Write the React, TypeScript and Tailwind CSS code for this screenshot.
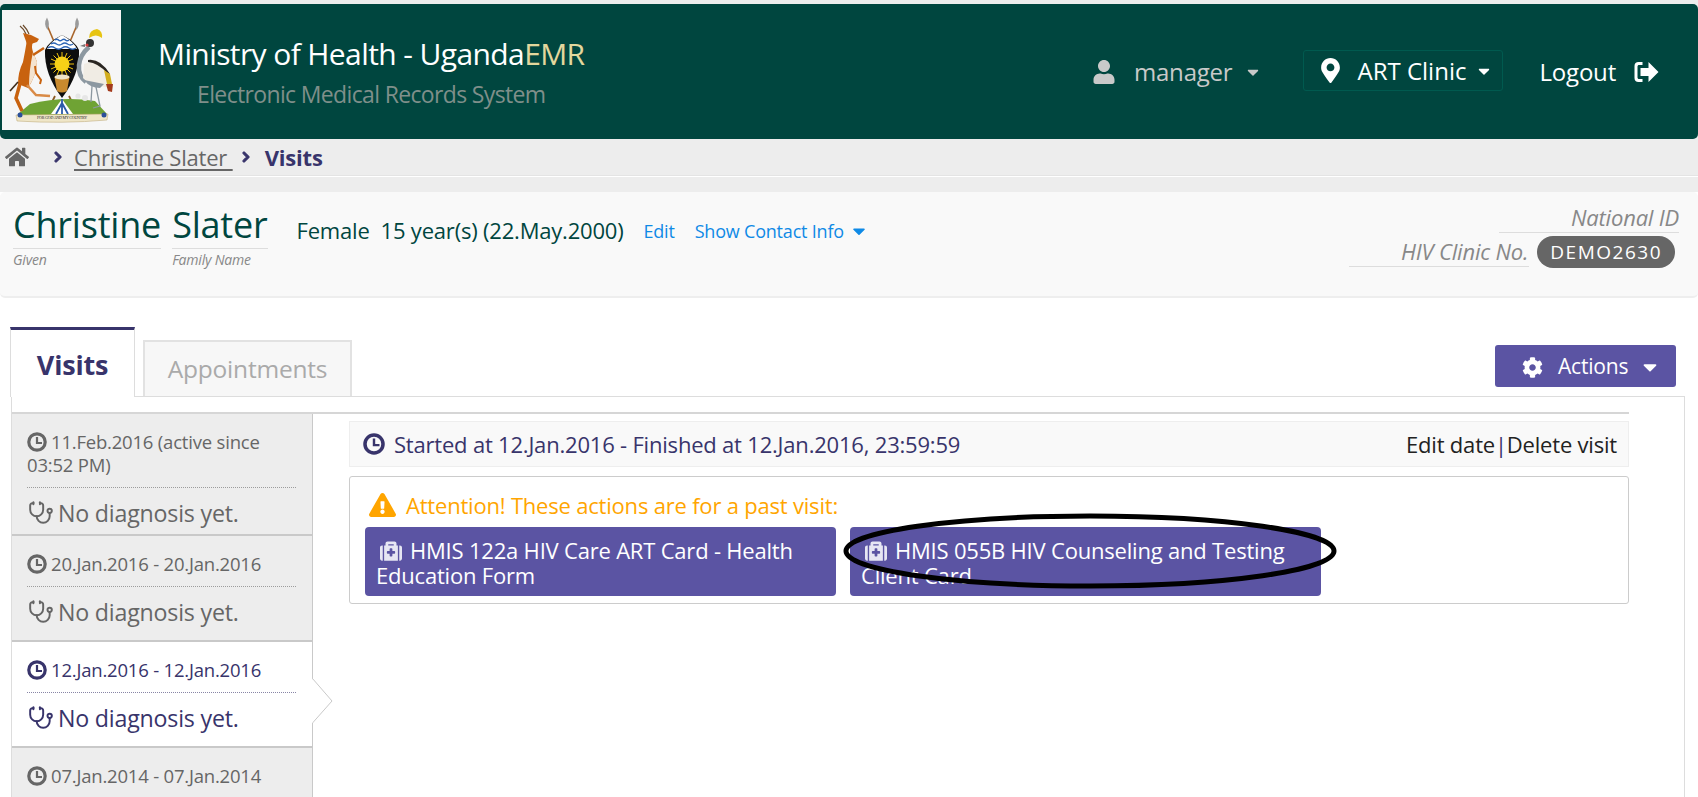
import React from "react";
import {
  FaCaretDown,
  FaChevronRight,
  FaCog,
  FaExclamationTriangle,
  FaHome,
  FaMapMarkerAlt,
  FaMedkit,
  FaUser,
} from "react-icons/fa";
import { Stethoscope } from "lucide-react";

type Visit = {
  label: string;
  active?: boolean;
  h: string;
};

const visits: Visit[] = [
  { label: "11.Feb.2016 (active since 03:52 PM)", h: "h-[122px]" },
  { label: "20.Jan.2016 - 20.Jan.2016", h: "h-[106px]" },
  { label: "12.Jan.2016 - 12.Jan.2016", h: "h-[106px]", active: true },
  { label: "07.Jan.2014 - 07.Jan.2014", h: "h-[106px]" },
];

const ClockIcon = ({ className }: { className?: string }) => (
  <svg viewBox="0 0 20 20" className={className}>
    <circle cx="10" cy="10" r="8.200" fill="none" stroke="currentColor" strokeWidth="3.200" />
    <path d="M10 5V11H15" fill="none" stroke="currentColor" strokeWidth="2.200" />
  </svg>
);

const SignOutIcon = () => (
  <svg viewBox="0 0 26 22" className="h-[22px] w-[29px]" fill="currentColor">
    <path d="M9 1H5C2.500 1 1 2.600 1 5v12c0 2.400 1.500 4 4 4h4v-3H5.500C4.600 18 4 17.400 4 16.500v-11C4 4.600 4.600 4 5.500 4H9z" />
    <path d="M15 1l10 10-10 10v-6H7V7h8z" />
  </svg>
);

const CoatOfArms = () => (
  <svg viewBox="2 10 119 120" className="h-[120px] w-[119px]">
    <rect x="2" y="10" width="119" height="120" fill="#f6f6f6" />
    {/* spears */}
    <path d="M55 44L47 25" stroke="#a8642a" strokeWidth="1.600" />
    <path d="M69 44L77 25" stroke="#a8642a" strokeWidth="1.600" />
    <path d="M47 17.500Q43 24 47.500 30Q50.500 24 47 17.500Z" fill="#9a9a9a" />
    <path d="M77 17.500Q81 24 76.500 30Q73.500 24 77 17.500Z" fill="#9a9a9a" />
    <path d="M55 96L49 108M69 96L75 108" stroke="#8a5a24" strokeWidth="1.800" />
    {/* mound and water */}
    <path d="M30 104Q62 96 95 101L107 114Q62 122 18 114Z" fill="#6fa334" />
    <path d="M62 99L51 114H73Z" fill="#fff" />
    <path d="M62 103L56 114M62 103L68 114M62 99V114" stroke="#2b5aa8" strokeWidth="1.800" />
    <circle cx="78" cy="96" r="2.600" fill="#e6e6e6" />
    <circle cx="85" cy="98" r="3" fill="#e6e6e6" />
    {/* shield */}
    <path d="M45 50Q48 42 62 35Q76 42 79 50Q80 74 62 98Q44 74 45 50Z" fill="#0d0d0d" />
    <path d="M47 49Q50 42 62 35Q74 42 77 49Z" fill="#fff" />
    <path d="M48 48q3.500-2.500 7 0t7 0 7 0 7 0M51 44q2.750-2 5.500 0t5.500 0 5.500 0 5.500 0M55 40q2-1.500 3.500 0t3.500 0 3.500 0 3.500 0" fill="none" stroke="#2b64b5" strokeWidth="1.500" />
    <g stroke="#f1c40f" strokeWidth="1">
      <path d="M50 64H74M62 52V76M53.500 55.500L70.500 72.500M70.500 55.500L53.500 72.500M51 59L73 69M73 59L51 69M57 53L67 75M67 53L57 75" />
    </g>
    <circle cx="62" cy="64" r="7.500" fill="#f7d117" />
    <path d="M54.500 77Q62 72.500 69.500 77L67 91Q62 94 57 91Z" fill="#c98a2e" />
    <ellipse cx="62" cy="77" rx="7.500" ry="2.500" fill="#efe3c8" />
    {/* kob */}
    <path d="M20 26Q24 29 26 34M23 25Q27 29 29 34" stroke="#6b4a2a" strokeWidth="1.200" fill="none" />
    <path d="M23 33L31 35L39 39L37 42L31 44L27 44Z" fill="#c8620f" />
    <path d="M27 40Q25 52 23 62Q18 72 18 84L28 88Q36 76 37 62L33 52Q31 46 33 42Z" fill="#c8620f" />
    <path d="M33 52L37 62Q36 76 29 86Q29 70 33 52Z" fill="#f4e3cf" />
    <path d="M33 55L44 48" stroke="#c8620f" strokeWidth="2.500" />
    <path d="M35 66L36 73L41 80L40 84" fill="none" stroke="#c8620f" strokeWidth="2" />
    <path d="M21 80L16 98L22 111" fill="none" stroke="#c8620f" strokeWidth="3.500" />
    <path d="M27 85L36 95L50 96" fill="none" stroke="#d98a46" strokeWidth="2.500" />
    <path d="M18 82L10 91" stroke="#3d2a18" strokeWidth="1.600" />
    {/* crane */}
    <path d="M89 47Q80 55 79 65Q78 76 86 82" fill="none" stroke="#8c98a1" strokeWidth="4.500" />
    <path d="M84 64Q96 58 106 72L110 88L100 86Q88 84 83 78Z" fill="#f0ece4" />
    <path d="M88 60Q100 58 110 74L107 73Q98 63 88 62Z" fill="#2a2622" />
    <path d="M104 70L110 74L112 84L107 84Z" fill="#d2ad1c" />
    <path d="M106 84L113 84L112 92L108 91Z" fill="#a33a1c" />
    <path d="M84 80L104 84L100 88Q90 88 84 80Z" fill="#8c98a1" />
    <path d="M96 87L100 106L93 108M92 86L91 102" fill="none" stroke="#8c98a1" strokeWidth="1.300" />
    <circle cx="90" cy="43" r="4" fill="#333" />
    <circle cx="87" cy="45" r="1.600" fill="#d43a3a" />
    <path d="M85 44L80 46L85 47Z" fill="#777" />
    <path d="M89 38Q89 30 97 29Q103 31 102 38Q96 33 89 38Z" fill="#e7c413" />
    {/* motto */}
    <path d="M16 115L108 114L107 120Q62 124 17 121Z" fill="#efe6c8" stroke="#b9a36d" strokeWidth=".5" />
    <circle cx="20" cy="115" r="2.500" fill="#2b4f9a" />
    <circle cx="104" cy="115" r="2.500" fill="#2b4f9a" />
    <text x="62" y="119" textAnchor="middle" fontSize="4" fill="#222" fontFamily="'Liberation Serif', serif">
      FOR GOD AND MY COUNTRY
    </text>
  </svg>
);

const VisitItem = ({ visit }: { visit: Visit }) => {
  const tone = visit.active ? "text-[#38346b]" : "text-[#666666]";
  return (
    <div
      className={`relative border-b-2 border-[#c9c9c9] pl-[15px] pr-[16px] pt-[16px] ${visit.h} ${tone} ${
        visit.active ? "bg-white" : "bg-[#ededed]"
      }`}
    >
      <div className="border-b border-dotted border-current/60 pb-[11px] text-[18.500px] leading-[23px]">
        <ClockIcon className="mr-[4px] inline-block h-[20px] w-[20px] align-[-3px]" />
        {visit.label}
      </div>
      <div className="mt-[10px] flex items-center gap-[4px] text-[23.200px] leading-[30px]">
        <Stethoscope className="ml-[1px] h-[26px] w-[26px]" strokeWidth={1.8} />
        No diagnosis yet.
      </div>
      {visit.active && (
        <svg viewBox="0 0 21 46" className="absolute -right-[21px] top-[36px] h-[46px] w-[21px]">
          <path d="M0.500 0.500L20 23L0.500 45" fill="#fff" stroke="#c9c9c9" />
          <rect x="0" y="1.500" width="1" height="43" fill="#fff" />
        </svg>
      )}
    </div>
  );
};

const FormButton = ({ first, rest }: { first: string; rest: string }) => (
  <button className="h-[69px] w-[471px] rounded-[4px] bg-[#5b54a3] px-[11px] pt-[3px] text-left text-[22px] leading-[25px] text-white">
    <span className="block whitespace-nowrap">
      <FaMedkit className="ml-[3px] mr-[7px] inline-block h-[22px] w-[24px] align-[-3px] text-[#e6e6f3]" />
      {first}
    </span>
    <span className="block whitespace-nowrap">{rest}</span>
  </button>
);

export default function App() {
  return (
    <div className="h-[797px] w-full overflow-hidden bg-white font-['Open_Sans',sans-serif] tracking-[-0.2px]">
      <div className="bg-[#ededed] pt-[4px]">
        <header className="flex h-[135px] rounded-[5px] bg-[#00463f] pl-[2px] pt-[6px]">
          <CoatOfArms />
          <div className="ml-[37px] pt-[25px] text-center">
            <div className="text-[30px] leading-[38px] tracking-[-0.600px] text-white">
              Ministry of Health - Uganda<span className="text-[#e2d79d]">EMR</span>
            </div>
            <div className="mt-[7px] text-[23px] leading-[28px] tracking-[-0.650px] text-[#7f8f8a]">
              Electronic Medical Records System
            </div>
          </div>
          <div className="ml-auto flex items-start pt-[41px] text-[24px] leading-[41px]">
            <div className="flex h-[41px] items-center text-[#c9c9c9]">
              <FaUser className="h-[24px] w-[24px]" />
              <span className="ml-[18px]">manager</span>
              <FaCaretDown className="ml-[12px] h-[18px] w-[18px]" />
            </div>
            <div className="-mt-px ml-[41px] flex h-[41px] w-[200px] items-center rounded-[3px] border border-[#005a4f] pl-[17px] text-white">
              <FaMapMarkerAlt className="h-[25px] w-[19px]" />
              <span className="ml-[17px] tracking-[0px]">ART Clinic</span>
              <FaCaretDown className="ml-[9px] h-[18px] w-[18px]" />
            </div>
            <div className="ml-[36px] mr-[37px] flex h-[41px] items-center text-white">
              Logout
              <span className="ml-[16px]">
                <SignOutIcon />
              </span>
            </div>
          </div>
        </header>

        <nav className="flex h-[37px] items-center border-b border-[#e4e4e4] pl-[5px] text-[22px] text-[#666666]">
          <FaHome className="h-[22px] w-[24px]" />
          <FaChevronRight className="ml-[23px] h-[12px] w-[12px] text-[#38346b]" strokeWidth={50} />
          <span className="ml-[10px] underline underline-offset-[3px]">Christine Slater&nbsp;</span>
          <FaChevronRight className="ml-[7px] h-[12px] w-[12px] text-[#38346b]" strokeWidth={50} />
          <span className="ml-[13px] font-bold text-[#38346b]">Visits</span>
        </nav>
        <div className="h-[16px] border-t border-white" />
      </div>

      <section className="flex h-[106px] rounded-[5px] border-b-2 border-[#eeeeee] bg-[#f9f9f9] pl-[13px] pr-[19px] pt-[10px]">
        <div>
          <div className="border-b border-[#dddddd] text-[36px] leading-[46px] text-[#00463f]">Christine</div>
          <div className="mt-[1px] text-[14px] italic leading-[20px] text-[#888888]">Given</div>
        </div>
        <div className="ml-[11px]">
          <div className="border-b border-[#dddddd] text-[36px] leading-[46px] text-[#00463f]">Slater</div>
          <div className="mt-[1px] text-[14px] italic leading-[20px] text-[#888888]">Family Name</div>
        </div>
        <div className="ml-[29px] mt-[14px] whitespace-pre text-[22px] leading-[28px] text-[#00463f]">
          Female  15 year(s) (22.May.2000)
        </div>
        <div className="ml-[20px] mt-[16px] text-[18px] leading-[26px] text-[#0f8ae6]">Edit</div>
        <div className="ml-[20px] mt-[16px] flex h-[26px] items-center text-[18px] text-[#0f8ae6]">
          Show Contact Info
          <FaCaretDown className="ml-[5px] h-[20px] w-[20px]" />
        </div>
        <div className="ml-auto pt-[1px] text-[22px] italic text-[#888888]">
          <div className="ml-auto w-[180px] border-b border-[#dddddd] text-right leading-[29px]">National ID</div>
          <div className="mr-[4px] mt-[3px] flex items-start">
            <div className="ml-auto w-[180px] border-b border-[#dddddd] pr-[1px] text-right leading-[30px]">
              HIV Clinic No.
            </div>
            <span className="ml-[8px] rounded-full bg-[#666666] px-[13px] text-[19px] not-italic leading-[32px] tracking-[1.500px] text-white">
              DEMO2630
            </span>
          </div>
        </div>
      </section>

      <div className="mx-[10px] mr-[13px] mt-[30px] flex h-[69px] items-end border-b border-[#dddddd]">
        <div className="-mb-px flex h-[70px] w-[125px] items-start justify-center border-x border-t-[3px] border-[#dddddd] border-t-[#38346b] bg-white pt-[16px] text-[27px] font-bold leading-[38px] text-[#38346b]">
          Visits
        </div>
        <div className="ml-[8px] flex h-[56px] w-[209px] items-center justify-center border-2 border-b-0 border-[#e2e2e2] bg-[#f7f7f7] text-[24.500px] text-[#aaaaaa]">
          Appointments
        </div>
        <button className="mb-[9px] ml-auto mr-[9px] flex h-[42px] w-[181px] items-center rounded-[3px] bg-[#5b54a3] pl-[27px] pt-[2px] text-[21px] text-white">
          <FaCog className="h-[21px] w-[21px]" />
          <span className="ml-[15px]">Actions</span>
          <FaCaretDown className="ml-[11px] h-[22px] w-[22px]" />
        </button>
      </div>

      <div className="ml-[11px] mr-[13px] h-[401px] border-x border-[#dddddd] pt-[15px]">
        <div className="mr-[55px] border-t-2 border-[#d6d6d6]" />
        <div className="flex">
          <div className="w-[301px] shrink-0 border-r border-[#c9c9c9]">
            {visits.map((visit) => (
              <VisitItem key={visit.label} visit={visit} />
            ))}
          </div>
          <div className="w-[1316px] pl-[36px] pt-[7px]">
            <div className="flex h-[46px] items-center justify-between border border-[#eeeeee] bg-[#f9f9f9] pl-[13px] pr-[11px] text-[22px] text-[#38346b]">
              <span className="flex items-center">
                <ClockIcon className="mr-[9px] h-[22px] w-[22px]" />
                Started at 12.Jan.2016 - Finished at 12.Jan.2016, 23:59:59
              </span>
              <span className="text-[#222222]">
                Edit date<span className="text-[#38346b]">|</span>Delete visit
              </span>
            </div>
            <div className="mt-[9px] h-[128px] rounded-[3px] border border-[#cccccc] pl-[15px] pt-[13px]">
              <div className="flex items-center text-[22px] leading-[30px] text-[#ffa500]">
                <FaExclamationTriangle className="mr-[10px] ml-[4px] h-[24px] w-[27px]" />
                Attention! These actions are for a past visit:
              </div>
              <div className="relative mt-[7px] flex gap-[14px]">
                <FormButton first="HMIS 122a HIV Care ART Card - Health" rest="Education Form" />
                <FormButton first="HMIS 055B HIV Counseling and Testing" rest="Client Card" />
                <svg viewBox="0 0 508 80" className="absolute left-[471px] top-[-17px] h-[80px] w-[508px]">
                  <ellipse cx="254" cy="41" rx="244" ry="35" fill="none" stroke="#000000" strokeWidth="5" />
                </svg>
              </div>
            </div>
          </div>
        </div>
      </div>
    </div>
  );
}
